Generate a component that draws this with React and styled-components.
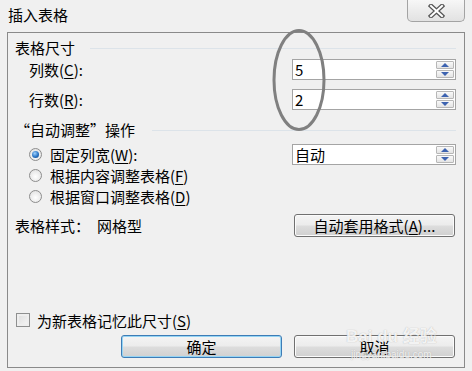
import React from "react";
import styled, { createGlobalStyle } from "styled-components";

const GlobalStyle = createGlobalStyle`
    html, body {
        margin: 0;
        padding: 0;
        background: #f0f0f0;
    }
    body {
        font-family: "Noto Sans CJK SC", "Liberation Sans", sans-serif;
        font-size: 15px;
        color: #000;
    }
`;

const Dialog = styled.div`
    position: relative;
    width: 472px;
    height: 371px;
    background: #f0f0f0;
    overflow: hidden;
`;

const TitleBar = styled.div`
    display: flex;
    justify-content: space-between;
    align-items: flex-start;
    height: 32px;
    padding: 0 7px 0 8px;
`;

const Title = styled.div`
    font-size: 15px;
    line-height: 16px;
    margin-top: 7px;
    color: #000;
`;

const CloseButton = styled.div`
    width: 58px;
    height: 22px;
    box-sizing: border-box;
    border: 1px solid #a3a3a3;
    border-top: none;
    border-radius: 0 0 5px 5px;
    background: linear-gradient(#f7f7f7, #ececec 50%, #e2e2e2);
    display: flex;
    align-items: center;
    justify-content: center;
`;

const Frame = styled.div`
    margin: 0 7px;
    height: 336px;
    box-sizing: border-box;
    border: 1px solid #8a8a8a;
    padding: 0 8px 8px 7px;
    display: flex;
    flex-direction: column;
`;

const GroupHeader = styled.div`
    display: flex;
    align-items: center;
    height: 20px;
    margin-top: ${(p) => p.$top}px;
    white-space: nowrap;
`;

const Separator = styled.div`
    flex: 1;
    height: 1px;
    background: #dce3e9;
    margin: 2px 0 0 ${(p) => p.$gap}px;
`;

const Row = styled.div`
    display: flex;
    align-items: center;
    justify-content: space-between;
    height: ${(p) => p.$h || 21}px;
    margin-top: ${(p) => p.$top || 0}px;
`;

const Label = styled.span`
    display: flex;
    align-items: center;
    margin-left: ${(p) => p.$indent || 0}px;
    white-space: nowrap;
`;

const Key = styled.span`
    text-decoration: underline;
    text-underline-offset: 2px;
`;

const SpinInput = styled.div`
    position: relative;
    width: 164px;
    height: 21px;
    box-sizing: border-box;
    border: 1px solid #a4a4a4;
    background: #fff;
    display: flex;
    align-items: center;
    justify-content: space-between;
    padding: 0 1px 0 2px;
    font-size: 15px;
`;

const SpinButtons = styled.div`
    display: flex;
    flex-direction: column;
    gap: 1px;
`;

const SpinButton = styled.div`
    width: 18px;
    height: 8px;
    box-sizing: border-box;
    border: 1px solid #b7b7b7;
    border-radius: 1px;
    background: linear-gradient(#f9f9f9, #e4e4e4);
    display: flex;
    align-items: center;
    justify-content: center;
`;

const Triangle = styled.div`
    width: 0;
    height: 0;
    border-left: 4px solid transparent;
    border-right: 4px solid transparent;
    ${(p) =>
        p.$down
            ? "border-top: 4px solid #3d63b0;"
            : "border-bottom: 4px solid #3d63b0;"}
`;

const RadioOption = styled.span`
    display: flex;
    align-items: center;
    gap: 8px;
    margin-left: 14px;
    white-space: nowrap;
`;

const Radio = styled.span`
    width: 13px;
    height: 13px;
    box-sizing: border-box;
    border-radius: 50%;
    border: 1px solid #8d8d8d;
    background: radial-gradient(circle at 50% 60%, #ffffff, #dcdcdc);
    display: flex;
    align-items: center;
    justify-content: center;

    &::after {
        content: "";
        width: 7px;
        height: 7px;
        border-radius: 50%;
        display: ${(p) => (p.$checked ? "block" : "none")};
        background: radial-gradient(circle at 40% 35%, #9fd3ff, #2a74c4 55%, #10417d);
    }
`;

const PushButton = styled.div`
    width: 161px;
    height: 23px;
    box-sizing: border-box;
    border: 1px solid ${(p) => (p.$default ? "#3d7cb6" : "#707070")};
    border-radius: 3px;
    background: linear-gradient(#f4f4f4, #ececec 48%, #dddddd 52%, #d0d0d0);
    box-shadow: ${(p) => (p.$default ? "inset 0 0 0 1px #95d4f4" : "inset 0 0 0 1px #fbfbfb")};
    display: flex;
    align-items: center;
    justify-content: center;
    font-size: 15px;
    margin-right: 1px;
    white-space: nowrap;
`;

const StyleValue = styled.span`
    margin-left: 7px;
`;

const CheckOption = styled.span`
    display: flex;
    align-items: center;
    gap: 7px;
    margin-left: 1px;
    white-space: nowrap;
`;

const Checkbox = styled.span`
    width: 14px;
    height: 14px;
    box-sizing: border-box;
    border: 1px solid #8e8f8f;
    background: linear-gradient(135deg, #dcdcdc, #f7f7f7);
    box-shadow: inset 0 0 0 2px #eeeeee;
`;

const ButtonRow = styled.div`
    display: flex;
    justify-content: flex-end;
    gap: 11px;
    margin-top: 5px;
`;

const Annotation = styled.svg`
    position: absolute;
    left: 272px;
    top: 29px;
`;

const Watermark = styled.div`
    position: absolute;
    left: 346px;
    top: 316px;
    display: flex;
    flex-direction: column;
    align-items: center;
    color: rgba(255, 255, 255, 0.85);
    text-shadow: 0 0 1px rgba(120, 120, 120, 0.55);
    font-family: "Liberation Sans", sans-serif;
    pointer-events: none;
`;

const WatermarkBrand = styled.div`
    font-size: 17px;
    font-weight: bold;
    line-height: 18px;
    margin-top: 12px;
    font-family: "Liberation Sans", "Noto Sans CJK SC", sans-serif;
`;

const WatermarkUrl = styled.div`
    font-size: 10px;
    line-height: 12px;
    margin-top: 3px;
`;

const Spinner = ({ value }) => (
    <SpinInput>
        <span>{value}</span>
        <SpinButtons>
            <SpinButton>
                <Triangle />
            </SpinButton>
            <SpinButton>
                <Triangle $down />
            </SpinButton>
        </SpinButtons>
    </SpinInput>
);

const CloseGlyph = () => (
    <svg width="17" height="14" viewBox="0 0 17 14">
        <path d="M3 2 L14 12 M14 2 L3 12" stroke="#555" strokeWidth="4.5" strokeLinecap="square" />
        <path d="M3 2 L14 12 M14 2 L3 12" stroke="#fff" strokeWidth="2" strokeLinecap="square" />
    </svg>
);

const App = () => {
    return (
        <>
            <GlobalStyle />
            <Dialog>
                <TitleBar>
                    <Title>插入表格</Title>
                    <CloseButton>
                        <CloseGlyph />
                    </CloseButton>
                </TitleBar>
                <Frame>
                    <GroupHeader $top={4}>
                        表格尺寸
                        <Separator $gap={15} />
                    </GroupHeader>
                    <Row $top={2}>
                        <Label $indent={14}>
                            列数(<Key>C</Key>):
                        </Label>
                        <Spinner value="5" />
                    </Row>
                    <Row $top={9}>
                        <Label $indent={14}>
                            行数(<Key>R</Key>):
                        </Label>
                        <Spinner value="2" />
                    </Row>

                    <GroupHeader $top={9}>
                        “自动调整”操作
                        <Separator $gap={17} />
                    </GroupHeader>
                    <Row $top={5}>
                        <RadioOption>
                            <Radio $checked />
                            <span>
                                固定列宽(<Key>W</Key>):
                            </span>
                        </RadioOption>
                        <Spinner value="自动" />
                    </Row>
                    <Row>
                        <RadioOption>
                            <Radio />
                            <span>
                                根据内容调整表格(<Key>F</Key>)
                            </span>
                        </RadioOption>
                    </Row>
                    <Row>
                        <RadioOption>
                            <Radio />
                            <span>
                                根据窗口调整表格(<Key>D</Key>)
                            </span>
                        </RadioOption>
                    </Row>
                    <Row $h={23} $top={7}>
                        <Label>
                            表格样式：<StyleValue>网格型</StyleValue>
                        </Label>
                        <PushButton>
                            自动套用格式(<Key>A</Key>)...
                        </PushButton>
                    </Row>

                    <Row $h={20} $top={73}>
                        <CheckOption>
                            <Checkbox />
                            <span>
                                为新表格记忆此尺寸(<Key>S</Key>)
                            </span>
                        </CheckOption>
                    </Row>
                    <ButtonRow>
                        <PushButton $default>确定</PushButton>
                        <PushButton>取消</PushButton>
                    </ButtonRow>
                </Frame>

                <Annotation width="54" height="103" viewBox="0 0 54 103">
                    <ellipse cx="27" cy="51" rx="25" ry="49.5" fill="none" stroke="#808080" strokeWidth="3" />
                </Annotation>
                <Watermark>
                    <WatermarkBrand>Bai du 经验</WatermarkBrand>
                    <WatermarkUrl>jingyan.baidu.com</WatermarkUrl>
                </Watermark>
            </Dialog>
        </>
    );
};

export default App;
